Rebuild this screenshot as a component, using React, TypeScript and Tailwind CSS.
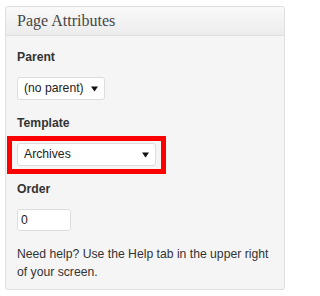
import React from "react";

function Arrow() {
  return (
    <svg width="7" height="6" viewBox="0 0 7 6" className="shrink-0">
      <path d="M0 0.5 H7 L3.5 5.5 Z" fill="#111" />
    </svg>
  );
}

export default function App() {
  return (
    <div className="w-[290px] h-[296px] bg-white pt-[6px] pl-[5px]" style={{ fontFamily: '"Liberation Sans", Arial, sans-serif' }}>
      <div className="w-[280px] h-[284px] border border-[#dfdfdf] rounded-[3px] bg-[#f5f5f5]">
        <div className="h-[29px] border-b border-[#dfdfdf] bg-gradient-to-b from-[#f9f9f9] to-[#ececec] rounded-t-[3px] pl-[11px] flex items-center">
          <h3 className="text-[16px] leading-[20px] text-[#464646] font-normal" style={{ fontFamily: '"Liberation Serif", "Times New Roman", serif' }}>
            Page Attributes
          </h3>
        </div>
        <div className="px-[11px] pt-[12px] text-[12.2px] text-[#333]">
          <p className="font-bold leading-[18px]">Parent</p>
          <div className="mt-[11px] w-[88px] h-[23px] bg-white border border-[#dddddd] rounded-[3px] flex items-center justify-between pl-[6px] pr-[6px] text-[#222]">
            <span>(no parent)</span>
            <Arrow />
          </div>
          <p className="mt-[14px] font-bold leading-[18px]">Template</p>
          <div className="relative mt-[11px] w-[139px] h-[23px]">
            <div className="w-full h-full bg-white border border-[#dddddd] rounded-[3px] flex items-center justify-between pl-[6px] pr-[6px] text-[#222]">
              <span>Archives</span>
              <Arrow />
            </div>
            <div className="absolute left-[-10px] top-[-7px] right-[-10px] bottom-[-8px] border-[5px] border-[#ff0000]" />
          </div>
          <p className="mt-[14px] font-bold leading-[18px]">Order</p>
          <div className="mt-[11px] w-[54px] h-[22px] bg-white border border-[#dddddd] rounded-[3px] flex items-center pl-[3px] text-[#222]">
            0
          </div>
          <p className="mt-[14px] leading-[18px]">
            Need help? Use the Help tab in the upper right of your screen.
          </p>
        </div>
      </div>
    </div>
  );
}
